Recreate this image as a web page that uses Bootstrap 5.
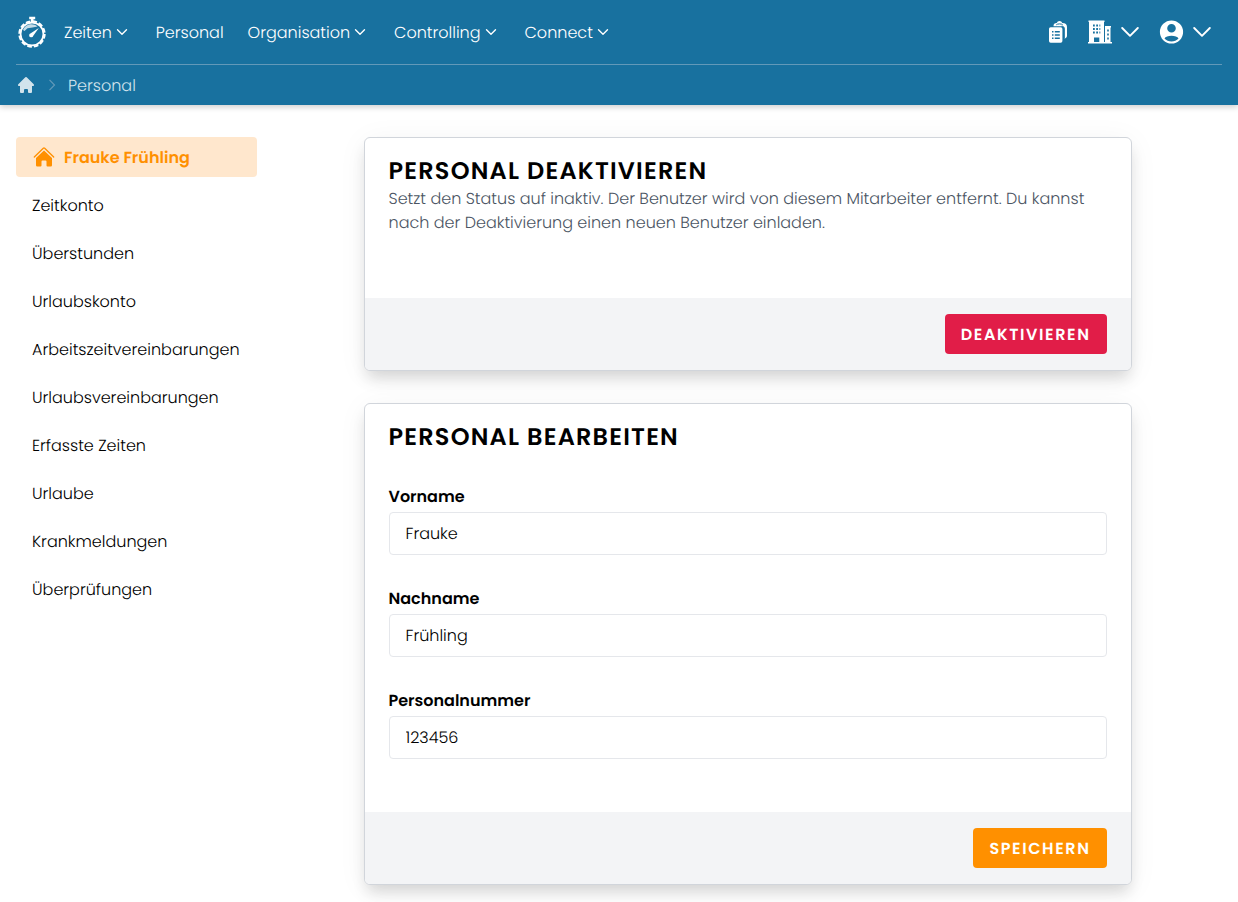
<!DOCTYPE html>
<html lang="de">
<head>
<meta charset="utf-8">
<meta name="viewport" content="width=device-width, initial-scale=1">
<title>Personal bearbeiten</title>
<link href="https://cdn.jsdelivr.net/npm/bootstrap@5.3.0/dist/css/bootstrap.min.css" rel="stylesheet">
<style>
  body { font-family: Poppins, Inter, sans-serif; font-size: 16px; font-weight: 300; line-height: 24px; color: #000; background: #fff; text-rendering: geometricPrecision; }
  input, button { text-rendering: inherit; }
  a { text-decoration: none; }
  svg { display: block; flex: none; }
  .app-header { background: #18719f; box-shadow: 0 2px 6px rgba(0,0,0,.2); }
  .top-row { height: 64px; }
  .main-nav { gap: 24px; margin-left: 16px; }
  .main-nav a { color: #fff; padding-top: 2px; }
  .main-nav .has-menu { gap: 4px; padding-right: 4px; }
  .main-nav svg, .side-nav svg { margin-bottom: 2px; }
  .icon-btn { color: #fff; background: none; border: 0; padding: 0; gap: 9px; }
  .tool-group { gap: 20px; padding-right: 11px; }
  .crumb-row { height: 41px; border-top: 1px solid #6299b9; color: #d1e3ec; gap: 12px; }
  .crumb-row a { color: #d1e3ec; }
  .crumb-text { padding-top: 2px; }
  .side-nav { width: 257px; gap: 8px; }
  .side-nav a { color: #000; height: 40px; padding: 2px 16px 0; border-radius: 4px; }
  .side-nav a.current { background: #ffe7cd; color: #ff9000; font-weight: 600; gap: 8px; }
  .panel-stack { max-width: 768px; gap: 32px; }
  .panel-box { background: #fff; border: 1px solid #d1d5db; border-radius: 6px; box-shadow: 0 10px 15px -3px rgba(0,0,0,.14), 0 4px 30px rgba(0,0,0,.05); }
  .panel-main { padding: 18px 24px 63px; }
  .panel-form { padding-bottom: 53px; }
  .panel-box h2 { font-size: 24px; line-height: 31px; font-weight: 600; letter-spacing: .05em; margin: 0; text-transform: uppercase; }
  .panel-box p { color: #4b5563; }
  .panel-foot { background: #f3f4f6; padding: 16px 24px; border-radius: 0 0 5px 5px; }
  .field { margin-top: 32px; }
  .field label { font-weight: 600; margin-bottom: 3px; display: block; }
  .field .form-control { height: 43px; padding: 0 16px; border: 1px solid #e5e7eb; border-radius: 4px; color: #000; font-size: 16px; font-weight: 300; }
  .action { height: 40px; padding: 2px 16px 0; border: 0; border-radius: 4px; font-weight: 600; letter-spacing: .1em; line-height: 24px; color: #fff; text-transform: uppercase; }
  .action-danger, .action-danger:hover { background: #e11d48; color: #fff; }
  .action-save, .action-save:hover { background: #ff9000; color: #fff; }
</style>
</head>
<body>
<svg width="0" height="0" class="position-absolute" aria-hidden="true">
  <symbol id="chev" viewBox="0 0 12 12"><path d="M1.500 3.800 6 8.300l4.500-4.500" fill="none" stroke="currentColor" stroke-width="1.400" stroke-linecap="round" stroke-linejoin="round"/></symbol>
  <symbol id="chev-lg" viewBox="0 0 18 12"><path d="M1.200 2 9 9.800 16.800 2" fill="none" stroke="currentColor" stroke-width="1.900" stroke-linecap="round" stroke-linejoin="round"/></symbol>
</svg>

<header class="app-header px-3 position-relative">
  <div class="top-row d-flex align-items-center">
    <a href="#" aria-label="Startseite">
      <svg width="32" height="32" viewBox="0 0 32 32" fill="none" stroke="#fff">
        <path d="M13.200 2h6M16.200 2v4" stroke-width="2.600"/>
        <circle cx="16" cy="18" r="11.400" stroke-width="1.700"/>
        <circle cx="16" cy="18" r="12.700" stroke-width="2" stroke-dasharray="4.600 2.050"/>
        <path d="M7 14c2.500-6 10-7.500 14.500-3.500l-5 1-5 .8-3 2.700z" fill="#fff" fill-opacity=".75" stroke="none"/>
        <path d="M22.800 12 17.300 19.700a2.100 2.100 0 1 1-2.500-2.500z" fill="#fff" stroke="none"/>
      </svg>
    </a>
    <nav class="main-nav d-flex align-items-center" aria-label="Hauptmenü">
      <a href="#" class="has-menu d-flex align-items-center">Zeiten <svg width="12" height="12"><use href="#chev"/></svg></a>
      <a href="#">Personal</a>
      <a href="#" class="has-menu d-flex align-items-center">Organisation <svg width="12" height="12"><use href="#chev"/></svg></a>
      <a href="#" class="has-menu d-flex align-items-center">Controlling <svg width="12" height="12"><use href="#chev"/></svg></a>
      <a href="#" class="has-menu d-flex align-items-center">Connect <svg width="12" height="12"><use href="#chev"/></svg></a>
    </nav>
    <div class="tool-group d-flex align-items-center ms-auto">
      <button class="icon-btn" aria-label="Aufgaben">
        <svg width="20" height="24" viewBox="0 0 20 24" fill="currentColor">
          <path d="M5.500 6.200C5.500 4 6.500 3.200 8.700 3a3 3 0 0 1 5.600 0C17.500 3.200 19 4.300 19 7v8.500a3 3 0 0 1-2.700 3V9a2.800 2.800 0 0 0-2.800-2.800z"/>
          <path d="M8.300 4.800c1-1.200 5.400-1.200 6.400 0M13.500 6.200c2 0 2.800.8 2.800 2.800v9.500" stroke="#18719f" stroke-width="1" fill="none"/>
          <path fill-rule="evenodd" d="M2.700 7.200h10A1.700 1.700 0 0 1 14.400 9v12a1.700 1.700 0 0 1-1.700 1.700h-10A1.700 1.700 0 0 1 1 21V9a1.700 1.700 0 0 1 1.700-1.800zM4 11v1.500h1.500V11zm2.800 0v1.500h5V11zM4 14.200v1.500h1.500v-1.500zm2.800 0v1.500h5v-1.500zM4 17.400v1.500h1.500v-1.500zm2.800 0v1.500h5v-1.500z"/>
        </svg>
      </button>
      <button class="icon-btn d-flex align-items-center" aria-label="Firma">
        <svg width="24" height="24" viewBox="0 0 24 24" fill="currentColor">
          <path fill-rule="evenodd" d="M0 22h1V2H.500V.500h16V2H16v20h1V6h6v1.500h-.500V22H24v1.500H0zM5 4.500v2h1.800v-2zm3.200 0v2H10v-2zm3.200 0v2h.9v-2zM5 8v2h1.800V8zm3.200 0v2H10V8zm3.200 0v2h.9V8zM5 11.500v2h1.800v-2zm3.200 0v2H10v-2zm3.200 0v2h.9v-2zM6 17.500V22h5.300v-4.500zM19.200 9.500v2h1.600v-2zm0 4v2h1.600v-2zm0 4v2h1.600v-2z"/>
        </svg>
        <svg width="18" height="12"><use href="#chev-lg"/></svg>
      </button>
      <button class="icon-btn d-flex align-items-center" aria-label="Benutzerkonto">
        <svg width="25" height="24" viewBox="0 0 24 24" fill="currentColor">
          <path fill-rule="evenodd" d="M12 .400a11.600 11.600 0 1 0 0 23.200A11.600 11.600 0 0 0 12 .400zM12 3.900a4.300 4.300 0 1 1 0 8.600 4.300 4.300 0 0 1 0-8.600zM5 18.500C6.500 14.800 17.500 14.800 19 18.500c-3.500 4-10.500 4-14 0z"/>
        </svg>
        <svg width="18" height="12"><use href="#chev-lg"/></svg>
      </button>
    </div>
  </div>
  <nav class="crumb-row d-flex align-items-center" aria-label="Brotkrumen">
    <a href="#" aria-label="Start">
      <svg width="20" height="20" viewBox="0 0 20 20" fill="currentColor"><path d="M10.700 2.300a1 1 0 0 0-1.400 0l-7 7A1 1 0 0 0 3 11h1v6a1 1 0 0 0 1 1h2a1 1 0 0 0 1-1v-2a1 1 0 0 1 1-1h2a1 1 0 0 1 1 1v2a1 1 0 0 0 1 1h2a1 1 0 0 0 1-1v-6h1a1 1 0 0 0 .7-1.700z"/></svg>
    </a>
    <svg width="8" height="12" viewBox="0 0 8 12" fill="none" stroke="#6299b9" stroke-width="1.200"><path d="m1.500.800 5 5.200-5 5.200"/></svg>
    <a href="#" class="crumb-text">Personal</a>
  </nav>
</header>

<div class="d-flex">
  <nav class="side-nav d-flex flex-column flex-shrink-0 ps-3 py-4 mt-2" aria-label="Personalmenü">
    <a href="#" class="current d-flex align-items-center">
      <svg width="24" height="24" viewBox="0 0 24 24" fill="currentColor"><path d="M12 5.500 4 13v7.300a1.200 1.200 0 0 0 1.200 1.200h3.300a1 1 0 0 0 1-1v-4a1 1 0 0 1 1-1h3a1 1 0 0 1 1 1v4a1 1 0 0 0 1 1h3.300a1.200 1.200 0 0 0 1.200-1.200V13z"/><path d="m2.300 12 9-8.800a1 1 0 0 1 1.400 0l9 8.800" fill="none" stroke="currentColor" stroke-width="1.300" stroke-linecap="round"/></svg>
      Frauke Frühling</a>
    <a href="#" class="d-flex align-items-center">Zeitkonto</a>
    <a href="#" class="d-flex align-items-center">Überstunden</a>
    <a href="#" class="d-flex align-items-center">Urlaubskonto</a>
    <a href="#" class="d-flex align-items-center">Arbeitszeitvereinbarungen</a>
    <a href="#" class="d-flex align-items-center">Urlaubsvereinbarungen</a>
    <a href="#" class="d-flex align-items-center">Erfasste Zeiten</a>
    <a href="#" class="d-flex align-items-center">Urlaube</a>
    <a href="#" class="d-flex align-items-center">Krankmeldungen</a>
    <a href="#" class="d-flex align-items-center">Überprüfungen</a>
  </nav>
  <main class="flex-grow-1 px-3 py-4 mt-2">
    <div class="panel-stack d-flex flex-column mx-auto">
      <section class="panel-box">
        <div class="panel-main">
          <h2>Personal deaktivieren</h2>
          <p class="mb-0">Setzt den Status auf inaktiv. Der Benutzer wird von diesem Mitarbeiter entfernt. Du kannst nach der Deaktivierung einen neuen Benutzer einladen.</p>
        </div>
        <div class="panel-foot d-flex justify-content-end">
          <button type="button" class="btn action action-danger">Deaktivieren</button>
        </div>
      </section>
      <form class="panel-box">
        <div class="panel-main panel-form">
          <h2>Personal bearbeiten</h2>
          <div class="field">
            <label for="vorname">Vorname</label>
            <input id="vorname" type="text" class="form-control" value="Frauke">
          </div>
          <div class="field">
            <label for="nachname">Nachname</label>
            <input id="nachname" type="text" class="form-control" value="Frühling">
          </div>
          <div class="field">
            <label for="nummer">Personalnummer</label>
            <input id="nummer" type="text" class="form-control" value="123456">
          </div>
        </div>
        <div class="panel-foot d-flex justify-content-end">
          <button type="button" class="btn action action-save">Speichern</button>
        </div>
      </form>
    </div>
  </main>
</div>
<script src="https://cdn.jsdelivr.net/npm/bootstrap@5.3.0/dist/js/bootstrap.bundle.min.js"></script>
</body>
</html>
